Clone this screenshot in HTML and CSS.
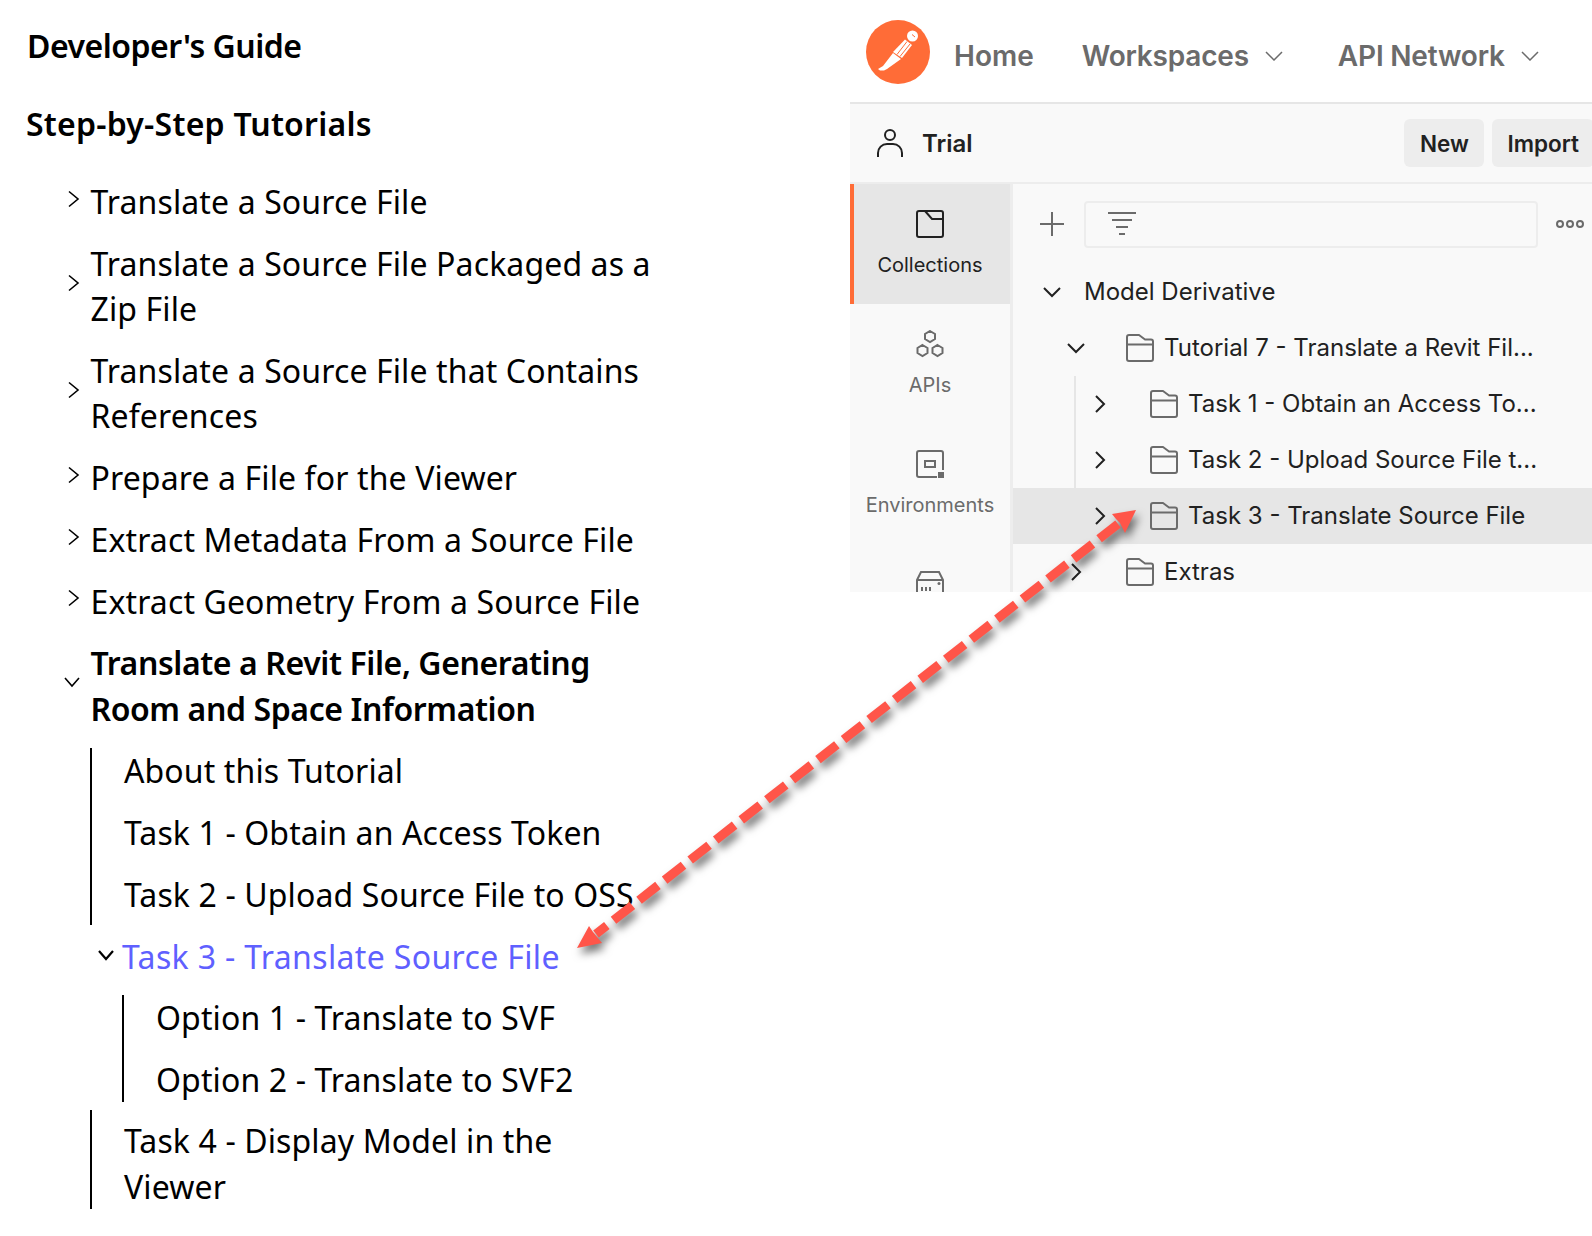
FILE: index.html
```html
<!DOCTYPE html>
<html>
    <head>
        <link rel="stylesheet" href="styles.css">
    </head>
    <body>
        <div class="page">
            <div class="guide">
                <h2 class="guide-title">Developer's Guide</h2>
                <h3 class="guide-sub">Step-by-Step Tutorials</h3>
                <ul class="toc">
                    <li class="toc-item"><svg class="chev" viewBox="0 0 12 20"><path d="M1 2.500l9 7.500-9 7.500"/></svg><span>Translate a Source File</span></li>
                    <li class="toc-item"><svg class="chev" viewBox="0 0 12 20"><path d="M1 2.500l9 7.500-9 7.500"/></svg><span>Translate a Source File Packaged as a Zip File</span></li>
                    <li class="toc-item"><svg class="chev" viewBox="0 0 12 20"><path d="M1 2.500l9 7.500-9 7.500"/></svg><span>Translate a Source File that Contains References</span></li>
                    <li class="toc-item"><svg class="chev" viewBox="0 0 12 20"><path d="M1 2.500l9 7.500-9 7.500"/></svg><span>Prepare a File for the Viewer</span></li>
                    <li class="toc-item"><svg class="chev" viewBox="0 0 12 20"><path d="M1 2.500l9 7.500-9 7.500"/></svg><span>Extract Metadata From a Source File</span></li>
                    <li class="toc-item"><svg class="chev" viewBox="0 0 12 20"><path d="M1 2.500l9 7.500-9 7.500"/></svg><span>Extract Geometry From a Source File</span></li>
                    <li class="toc-item bold"><svg class="chev down" viewBox="0 0 16 12"><path d="M1 2l7 8 7-8"/></svg><span>Translate a Revit File, Generating Room and Space Information</span></li>
                </ul>
                <ul class="sub-toc first">
                    <li class="sub-item">About this Tutorial</li>
                    <li class="sub-item">Task 1 - Obtain an Access Token</li>
                    <li class="sub-item">Task 2 - Upload Source File to OSS</li>
                </ul>
                <div class="toc-item current"><svg class="chev down" viewBox="0 0 16 12"><path d="M1 2l7 8 7-8"/></svg><span>Task 3 - Translate Source File</span></div>
                <ul class="sub-toc nested">
                    <li class="sub-item">Option 1 - Translate to SVF</li>
                    <li class="sub-item">Option 2 - Translate to SVF2</li>
                </ul>
                <ul class="sub-toc last">
                    <li class="sub-item">Task 4 - Display Model in the Viewer</li>
                </ul>
            </div>

            <div class="app">
                <div class="topbar">
                    <svg class="logo" viewBox="0 0 64 64">
                        <circle cx="32" cy="32" r="32" fill="#ff6c37"/>
                        <circle cx="46.500" cy="16" r="5.500" fill="#fff"/>
                        <path d="M39 19.500L46 25L36 38L27 32Z" fill="#fff"/>
                        <path d="M27 33L35 39L21 49L18 50.500L14 50.500L12 49L17 46Z" fill="#fff"/>
                        <path d="M41 21.500L31 34.500M44 24L34 36.500M46 14.500L49 17" fill="none" stroke="#ff6c37" stroke-width="1"/>
                    </svg>
                    <a class="nav">Home</a>
                    <a class="nav tight">Workspaces<svg class="nav-chev" viewBox="0 0 18 10"><path d="M1 1l8 8 8-8"/></svg></a>
                    <a class="nav tight">API Network<svg class="nav-chev" viewBox="0 0 18 10"><path d="M1 1l8 8 8-8"/></svg></a>
                </div>
                <div class="workbar">
                    <svg class="person" viewBox="0 0 26 28"><circle cx="13" cy="6" r="5"/><path d="M1 28v-4a9 9 0 0 1 9-9h6a9 9 0 0 1 9 9v4"/></svg>
                    <span class="workspace">Trial</span>
                    <button class="btn btn-new">New</button>
                    <button class="btn btn-import">Import</button>
                </div>
                <div class="main">
                    <div class="side">
                        <div class="side-item active">
                            <svg class="side-icon" viewBox="0 0 28 28"><rect x="1" y="1" width="26" height="26" rx="2"/><path d="M9 1l7 8h11"/></svg>
                            <span>Collections</span>
                        </div>
                        <div class="side-item">
                            <svg class="side-icon" viewBox="0 0 28 28"><path d="M14 1l5 3v5l-5 3-5-3V4zM6.500 15l5 3v5l-5 3-5-3v-5zM21.500 15l5 3v5l-5 3-5-3v-5z"/></svg>
                            <span>APIs</span>
                        </div>
                        <div class="side-item">
                            <svg class="side-icon" viewBox="0 0 28 28"><path d="M21 27H3a2 2 0 0 1-2-2V3a2 2 0 0 1 2-2h22a2 2 0 0 1 2 2v17"/><rect x="9" y="11" width="10" height="6"/><rect class="solid" x="22" y="22" width="6" height="6"/></svg>
                            <span>Environments</span>
                        </div>
                        <div class="side-item">
                            <svg class="side-icon" viewBox="0 0 28 28"><path d="M1 28V10L5 2h18l4 8v18M1 10h26"/><path d="M6 17v4M10 17v4M14 17v4"/><circle class="solid" cx="23" cy="13.500" r="1.500"/></svg>
                        </div>
                    </div>
                    <div class="panel">
                        <div class="tools">
                            <svg class="plus" viewBox="0 0 24 24"><path d="M12 0v24M0 12h24"/></svg>
                            <div class="filter">
                                <svg class="filter-icon" viewBox="0 0 28 24"><path d="M0 1h28M4 8h20M8 15h12M11 22h6"/></svg>
                            </div>
                            <svg class="dots" viewBox="0 0 28 8"><circle cx="4" cy="4" r="3"/><circle cx="14" cy="4" r="3"/><circle cx="24" cy="4" r="3"/></svg>
                        </div>
                        <div class="tree">
                            <div class="row root"><svg class="row-chev" viewBox="0 0 18 12"><path d="M1 2l8 8 8-8"/></svg><span>Model Derivative</span></div>
                            <div class="row lvl1"><svg class="row-chev" viewBox="0 0 18 12"><path d="M1 2l8 8 8-8"/></svg><svg class="folder" viewBox="0 0 28 28"><path d="M1 25V3a2 2 0 0 1 2-2h10l6 4.500h6a2 2 0 0 1 2 2V25a2 2 0 0 1-2 2H3a2 2 0 0 1-2-2zM1 10.500h26"/></svg><span>Tutorial 7 - Translate a Revit Fil...</span></div>
                            <div class="guide-rows">
                                <div class="row lvl2"><svg class="row-chev right" viewBox="0 0 12 18"><path d="M2 1l8 8-8 8"/></svg><svg class="folder" viewBox="0 0 28 28"><path d="M1 25V3a2 2 0 0 1 2-2h10l6 4.500h6a2 2 0 0 1 2 2V25a2 2 0 0 1-2 2H3a2 2 0 0 1-2-2zM1 10.500h26"/></svg><span>Task 1 - Obtain an Access To...</span></div>
                                <div class="row lvl2"><svg class="row-chev right" viewBox="0 0 12 18"><path d="M2 1l8 8-8 8"/></svg><svg class="folder" viewBox="0 0 28 28"><path d="M1 25V3a2 2 0 0 1 2-2h10l6 4.500h6a2 2 0 0 1 2 2V25a2 2 0 0 1-2 2H3a2 2 0 0 1-2-2zM1 10.500h26"/></svg><span>Task 2 - Upload Source File t...</span></div>
                            </div>
                            <div class="row lvl2 selected"><svg class="row-chev right" viewBox="0 0 12 18"><path d="M2 1l8 8-8 8"/></svg><svg class="folder" viewBox="0 0 28 28"><path d="M1 25V3a2 2 0 0 1 2-2h10l6 4.500h6a2 2 0 0 1 2 2V25a2 2 0 0 1-2 2H3a2 2 0 0 1-2-2zM1 10.500h26"/></svg><span>Task 3 - Translate Source File</span></div>
                            <div class="row lvl1"><svg class="row-chev right" viewBox="0 0 12 18"><path d="M2 1l8 8-8 8"/></svg><svg class="folder" viewBox="0 0 28 28"><path d="M1 25V3a2 2 0 0 1 2-2h10l6 4.500h6a2 2 0 0 1 2 2V25a2 2 0 0 1-2 2H3a2 2 0 0 1-2-2zM1 10.500h26"/></svg><span>Extras</span></div>
                        </div>
                    </div>
                </div>
            </div>

            <!-- callout arrow drawn over both screenshots -->
            <svg class="callout" viewBox="0 0 1592 1236">
                <line class="callout-line" x1="1118" y1="524" x2="596" y2="934"/>
                <path class="callout-head" d="M1136 510L1112 514L1116 519L1120 523L1125 533Z"/>
                <path class="callout-head" d="M577 948L589 926L593 932L597 937L602 943Z"/>
            </svg>
        </div>
    </body>
</html>
```

FILE: styles.css
```css
*{
    margin: 0;
    padding: 0;
    box-sizing: border-box;
}
html, body{
    background: #fff;
}
.page{
    position: relative;
    width: 1592px;
    height: 1236px;
    overflow: hidden;
    display: flex;
    align-items: flex-start;
}

/* left: docs table of contents */
.guide{
    width: 850px;
    padding: 23px 0 0 26px;
    font-family: "Noto Sans", sans-serif;
    color: #000;
    font-size: 32px;
    line-height: 45.500px;
    letter-spacing: .12px;
}
.guide-title{
    font-size: 32px;
    font-weight: 600;
    line-height: 45px;
    margin-left: 1px;
    letter-spacing: -.5px;
}
.guide-sub{
    font-size: 32px;
    font-weight: 600;
    line-height: 45px;
    margin-top: 33px;
    letter-spacing: .23px;
}
.toc{
    list-style: none;
    margin-top: 25px;
}
.toc-item{
    display: flex;
    align-items: center;
    padding: 8.100px 0;
    margin-left: 42px;
    width: 590px;
}
.toc-item span{
    margin-left: 10.500px;
}
.chev{
    width: 12px;
    height: 20px;
    flex: none;
    fill: none;
    stroke: #000;
    stroke-width: 1.600;
    margin-top: -6px;
}
.chev.down{
    width: 16px;
    height: 12px;
    margin-left: -4px;
    margin-top: -8px;
}
.bold{
    font-weight: 600;
    letter-spacing: -.4px;
}
.sub-toc{
    list-style: none;
    margin-left: 64px;
    margin-top: 9px;
    border-left: 2px solid #000;
    width: 560px;
}
.sub-item{
    padding-left: 32px;
}
.sub-item + .sub-item{
    margin-top: 16.200px;
}
.first{
    padding-bottom: 8.100px;
}
.current{
    margin-left: 72px;
    margin-top: 1px;
    color: #5f60ff;
    width: 560px;
    letter-spacing: .35px;
}
.current .chev.down{
    stroke-width: 2.200;
    margin-left: 0;
    margin-top: -4px;
}
.current span{
    margin-left: 8px;
}
.nested{
    margin-left: 96px;
    margin-top: 7.100px;
    width: 540px;
}
.last{
    padding-top: 8.100px;
    margin-top: 8.100px;
}

/* right: postman window */
.app{
    width: 742px;
    height: 592px;
    flex: none;
    overflow: hidden;
    font-family: Inter, sans-serif;
    color: #212121;
}
.topbar{
    height: 104px;
    background: #fff;
    border-bottom: 2px solid #e6e6e6;
    display: flex;
    align-items: center;
    padding-left: 16px;
}
.logo{
    width: 64px;
    height: 64px;
    flex: none;
    margin: 2px 24px 0 0;
}
.nav{
    font-size: 28px;
    font-weight: 600;
    color: #6b6b6b;
    margin-right: 48px;
    display: flex;
    flex: none;
    align-items: center;
    margin-top: 10px;
    white-space: nowrap;
}
.tight{
    letter-spacing: -.2px;
}
.nav-chev{
    width: 18px;
    height: 10px;
    flex: none;
    margin-left: 16px;
    margin-right: 7px;
    fill: none;
    stroke: #6b6b6b;
    stroke-width: 1.500;
}
.workbar{
    height: 80px;
    background: #f9f9f9;
    border-bottom: 2px solid #ededed;
    display: flex;
    align-items: center;
    padding-left: 27px;
}
.person{
    width: 26px;
    height: 28px;
    fill: none;
    stroke: #212121;
    stroke-width: 2;
}
.workspace{
    font-size: 24px;
    font-weight: 600;
    margin-left: 19px;
    margin-right: auto;
}
.btn{
    height: 48px;
    border: 0;
    border-radius: 6px;
    background: #ededed;
    color: #212121;
    font-family: Inter, sans-serif;
    font-size: 22.500px;
    font-weight: 600;
    padding: 0 15px;
    margin-left: 8px;
    flex: none;
}
.btn-new{
    min-width: 80px;
}
.btn-import{
    margin-right: -2px;
}
.main{
    display: flex;
    height: 408px;
    background: #f9f9f9;
}
.side{
    width: 163px;
    flex: none;
    border-right: 3px solid #ededed;
}
.side-item{
    height: 120px;
    display: flex;
    flex-direction: column;
    align-items: center;
    padding-top: 26px;
    font-size: 20px;
    line-height: 24px;
    color: #6b6b6b;
}
.side-item span{
    margin-top: 15px;
}
.side-item.active{
    background: #e6e6e6;
    border-left: 4px solid #ff6c37;
    color: #212121;
    padding-right: 4px;
}
.side-item.active span{
    margin-top: 15px;
}
.side-icon{
    width: 28px;
    height: 28px;
    flex: none;
    fill: none;
    stroke: currentColor;
    stroke-width: 2;
}
.side-icon .solid{
    fill: currentColor;
    stroke: none;
}
.panel{
    flex: 1;
}
.tools{
    height: 80px;
    display: flex;
    align-items: center;
    padding: 4px 8px 4px 27px;
}
.plus{
    width: 24px;
    height: 24px;
    fill: none;
    stroke: #6b6b6b;
    stroke-width: 2;
}
.filter{
    width: 454px;
    height: 47px;
    margin-left: 20px;
    border: 2px solid #ededed;
    border-radius: 4px;
    display: flex;
    align-items: center;
    padding-left: 22px;
}
.filter-icon{
    width: 28px;
    height: 24px;
    fill: none;
    stroke: #6b6b6b;
    stroke-width: 2;
}
.dots{
    width: 28px;
    height: 8px;
    margin-left: 18px;
    fill: none;
    stroke: #6b6b6b;
    stroke-width: 2;
}
.row{
    height: 56px;
    display: flex;
    align-items: center;
    font-size: 24px;
    white-space: nowrap;
    position: relative;
}
.row span{
    margin-bottom: 2px;
}
.row-chev{
    width: 18px;
    height: 12px;
    flex: none;
    fill: none;
    stroke: #212121;
    stroke-width: 2;
}
.row-chev.right{
    width: 12px;
    height: 18px;
}
.folder{
    width: 28px;
    height: 28px;
    flex: none;
    fill: none;
    stroke: #6b6b6b;
    stroke-width: 2;
    stroke-linejoin: round;
    margin-right: 10px;
}
.root{
    padding-left: 30px;
}
.root span{
    margin-left: 23px;
}
.lvl1{
    padding-left: 54px;
}
.lvl1 .row-chev{
    margin-right: 41px;
}
.lvl1 .folder{
    margin-right: 10px;
}
.lvl1 .row-chev.right{
    margin-left: 3px;
    margin-right: 44px;
}
.guide-rows{
    border-left: 2px solid #e6e6e6;
    margin-left: 61px;
}
.guide-rows .lvl2{
    padding-left: 18px;
}
.lvl2{
    padding-left: 81px;
}
.lvl2 .row-chev{
    margin-right: 44px;
}
.selected{
    background: #e6e6e6;
}

/* arrow overlay */
.callout{
    position: absolute;
    left: 0;
    top: 0;
    width: 1592px;
    height: 1236px;
    pointer-events: none;
    filter: drop-shadow(3px 6px 4px rgba(0,0,0,.55));
}
.callout-line{
    stroke: #ff5549;
    stroke-width: 9;
    stroke-dasharray: 24 8.500;
}
.callout-head{
    fill: #ff5549;
}
```
